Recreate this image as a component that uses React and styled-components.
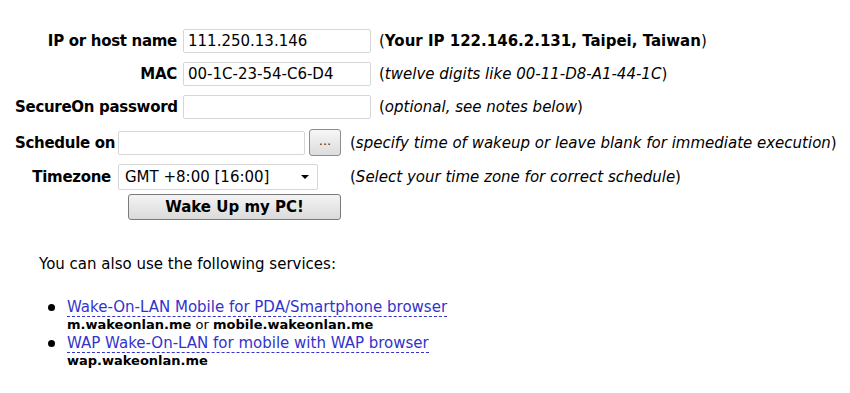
import React from 'react';
import styled, { createGlobalStyle } from 'styled-components';

const GlobalStyle = createGlobalStyle`
  body {
    margin: 0;
    background: #ffffff;
    font-family: Verdana, "DejaVu Sans", sans-serif;
    font-size: 15px;
    color: #000000;
  }
`;

const Page = styled.div`
  padding: 29px 0 0 15px;
`;

const FormTable = styled.div`
  display: grid;
  grid-template-columns: ${(p) => p.$cols};
  column-gap: ${(p) => p.$gap || '6px'};
  row-gap: ${(p) => p.$rowGap || '9px'};
  align-items: center;
  margin-top: ${(p) => p.$top || '0'};
`;

const Label = styled.label`
  font-weight: bold;
  text-align: right;
  white-space: nowrap;
  letter-spacing: -0.3px;
`;

const TextInput = styled.input`
  box-sizing: border-box;
  width: ${(p) => p.$w || '188px'};
  height: 24px;
  border: 1px solid #d6d6d6;
  border-radius: 2px;
  padding: 0 4px;
  font-family: inherit;
  font-size: 15px;
  color: #000;
  outline: none;
`;

const Note = styled.span`
  white-space: nowrap;
  margin-left: 2px;
  em {
    font-style: italic;
  }
  b {
    font-weight: bold;
  }
`;

const InputGroup = styled.div`
  display: flex;
  align-items: center;
  gap: 4px;
`;

const SmallButton = styled.button`
  box-sizing: border-box;
  width: 32px;
  height: 27px;
  border: 1px solid #8e8e8e;
  border-radius: 3px;
  background: linear-gradient(#f6f6f6, #dcdcdc);
  font-family: inherit;
  font-size: 13px;
  padding: 0 0 4px;
  color: #333;
`;

const Select = styled.div`
  box-sizing: border-box;
  width: 200px;
  height: 26px;
  border: 1px solid #d6d6d6;
  border-radius: 2px;
  display: flex;
  align-items: center;
  justify-content: space-between;
  padding: 0 8px 0 6px;
`;

const Caret = styled.span`
  width: 0;
  height: 0;
  border-left: 4px solid transparent;
  border-right: 4px solid transparent;
  border-top: 4px solid #000;
`;

const WakeButton = styled.button`
  box-sizing: border-box;
  width: 213px;
  height: 26px;
  margin: -4px 0 0 10px;
  border: 1px solid #7a7a7a;
  border-radius: 3px;
  background: linear-gradient(#f4f4f4, #dadada);
  font-family: inherit;
  font-size: 15px;
  font-weight: bold;
  color: #000;
  padding: 0;
`;

const Intro = styled.p`
  margin: 35px 0 0 24px;
  font-size: 15px;
`;

const ServiceList = styled.ul`
  margin: 25px 0 0 0;
  padding-left: 52px;
  list-style: none;
`;

const Item = styled.li`
  position: relative;
  line-height: 18px;
  &::before {
    content: '';
    position: absolute;
    left: -19px;
    top: 6px;
    width: 7px;
    height: 7px;
    border-radius: 50%;
    background: #000;
  }
`;

const Link = styled.a`
  color: #3333cc;
  text-decoration: none;
  border-bottom: 1px dashed #3333cc;
`;

const Hosts = styled.div`
  font-size: 13px;
  line-height: 18px;
  b {
    font-weight: bold;
  }
`;

export default function App() {
  return (
    <>
      <GlobalStyle />
      <Page>
        <FormTable $cols="162px 188px auto">
          <Label>IP or host name</Label>
          <TextInput defaultValue="111.250.13.146" />
          <Note>
            (<b>Your IP 122.146.2.131, Taipei, Taiwan</b>)
          </Note>

          <Label>MAC</Label>
          <TextInput defaultValue="00-1C-23-54-C6-D4" />
          <Note>
            (<em>twelve digits like 00-11-D8-A1-44-1C</em>)
          </Note>

          <Label>SecureOn password</Label>
          <TextInput />
          <Note>
            (<em>optional, see notes below</em>)
          </Note>
        </FormTable>

        <FormTable $cols="96px 223px auto" $gap="7px" $rowGap="8px" $top="10px">
          <Label>Schedule on</Label>
          <InputGroup>
            <TextInput $w="187px" />
            <SmallButton>...</SmallButton>
          </InputGroup>
          <Note>
            (<em>specify time of wakeup or leave blank for immediate execution</em>)
          </Note>

          <Label>Timezone</Label>
          <Select>
            <span>GMT +8:00 [16:00]</span>
            <Caret />
          </Select>
          <Note>
            (<em>Select your time zone for correct schedule</em>)
          </Note>

          <span />
          <WakeButton>Wake Up my PC!</WakeButton>
          <span />
        </FormTable>

        <Intro>You can also use the following services:</Intro>

        <ServiceList>
          <Item>
            <Link href="#">Wake-On-LAN Mobile for PDA/Smartphone browser</Link>
            <Hosts>
              <b>m.wakeonlan.me</b> or <b>mobile.wakeonlan.me</b>
            </Hosts>
          </Item>
          <Item>
            <Link href="#">WAP Wake-On-LAN for mobile with WAP browser</Link>
            <Hosts>
              <b>wap.wakeonlan.me</b>
            </Hosts>
          </Item>
        </ServiceList>
      </Page>
    </>
  );
}
